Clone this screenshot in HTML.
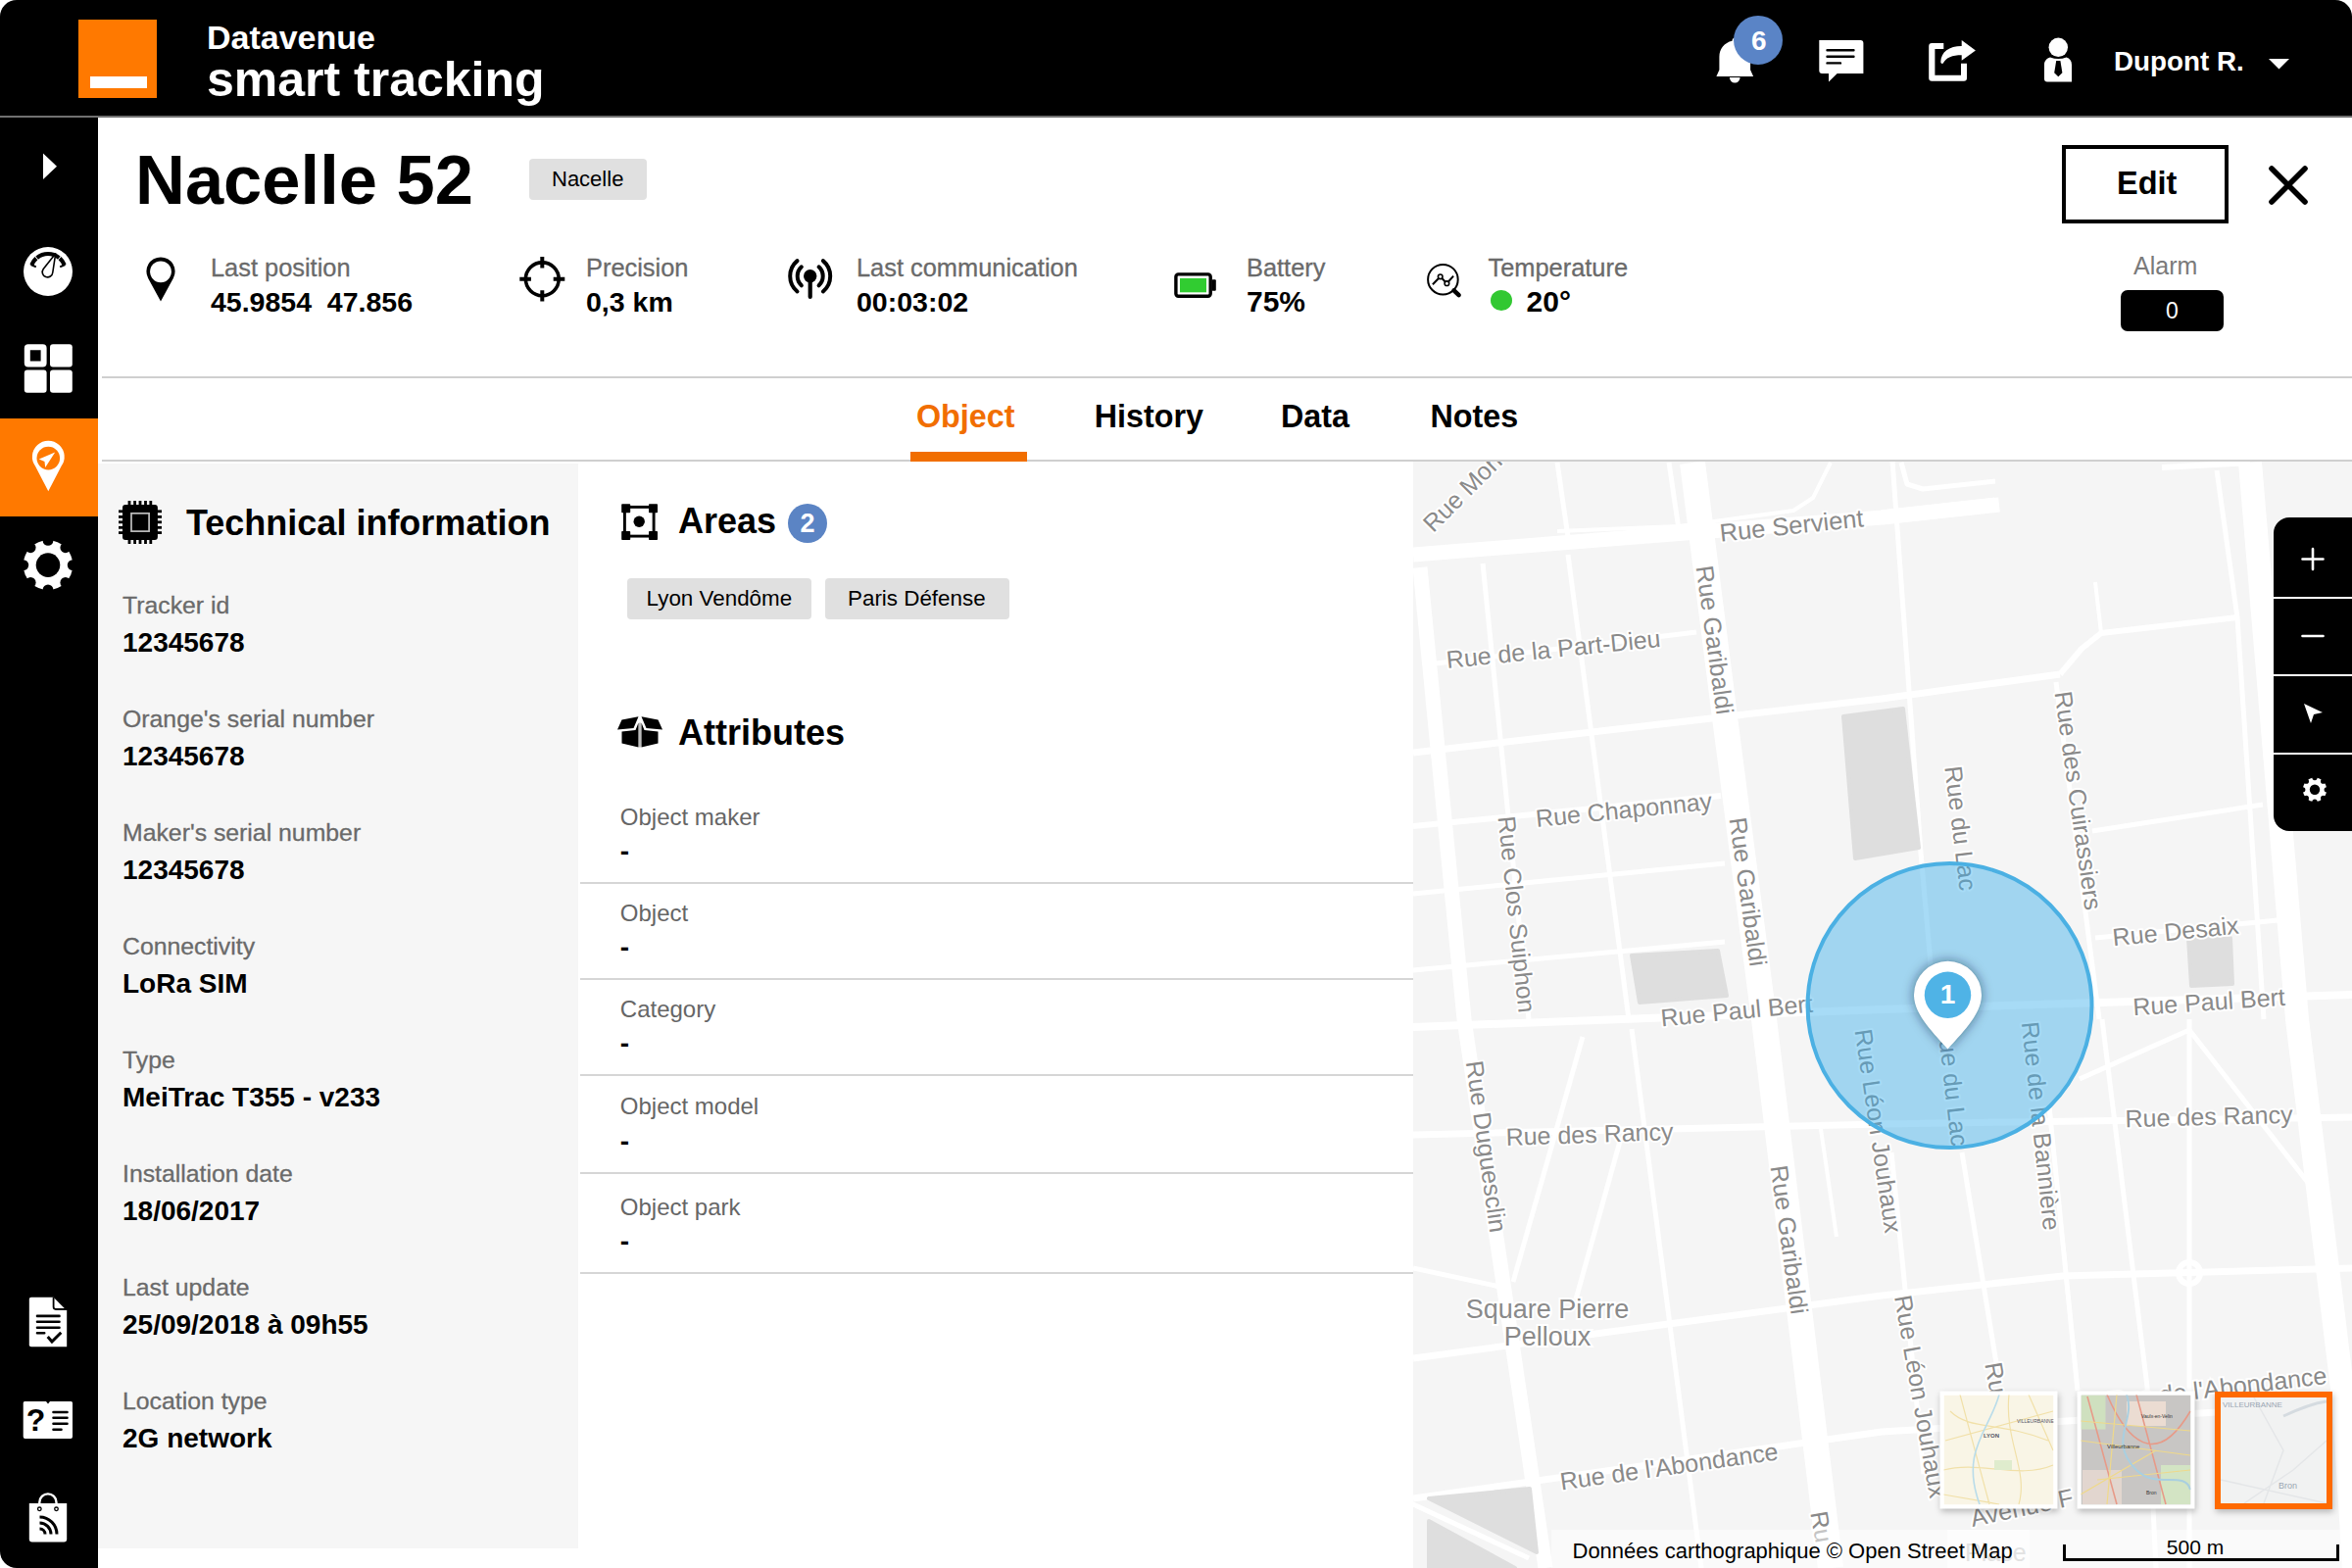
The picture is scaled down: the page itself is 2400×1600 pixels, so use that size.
<!DOCTYPE html>
<html><head><meta charset="utf-8">
<style>
html,body{margin:0;padding:0;width:2400px;height:1600px;overflow:hidden;background:#fff;}
body{position:relative;font-family:"Liberation Sans",sans-serif;}
.t{position:absolute;line-height:1;white-space:nowrap;}
.b{font-weight:bold;}
.lbl{color:#6a6a6a;font-size:25.4px;-webkit-text-stroke:0.3px #6a6a6a;}
.val{color:#000;font-size:28.5px;font-weight:bold;}
.abs{position:absolute;}
</style></head><body>
<!-- header -->
<div class="abs" style="left:0;top:0;width:2400px;height:118px;background:#000;border-radius:17px 17px 0 0;"></div>
<div class="abs" style="left:0;top:118px;width:2400px;height:2px;background:#707070;"></div>
<div class="abs" style="left:80px;top:20px;width:80px;height:80px;background:#ff7900;"></div>
<div class="abs" style="left:92px;top:78px;width:58px;height:12px;background:#fff;"></div>
<div class="t b" style="left:211px;top:21.2px;font-size:34px;color:#fff;">Datavenue</div>
<div class="t b" style="left:211px;top:55.9px;font-size:50px;color:#fff;">smart tracking</div>
<div class="t b" style="left:2157px;top:48.5px;font-size:27.8px;color:#fff;">Dupont R.</div>

<!-- sidebar -->
<div class="abs" style="left:0;top:120px;width:100px;height:1480px;background:#000;border-radius:0 0 0 17px;"></div>
<div class="abs" style="left:0;top:427px;width:100px;height:100px;background:#ff7900;"></div>

<!-- title -->
<div class="t b" style="left:138px;top:149px;font-size:70.5px;color:#000;">Nacelle 52</div>
<div class="abs" style="left:540px;top:162px;width:120px;height:42px;background:#e0e0e0;border-radius:4px;"></div>
<div class="t" style="left:563px;top:172.4px;font-size:22px;color:#000;">Nacelle</div>
<div class="abs" style="left:2104px;top:148px;width:170px;height:80px;border:4px solid #000;box-sizing:border-box;"></div>
<div class="t b" style="left:2160px;top:171.2px;font-size:32.5px;color:#000;">Edit</div>
<div class="t" style="left:2177px;top:259.3px;font-size:25px;color:#7a7a7a;">Alarm</div>
<div class="abs" style="left:2164px;top:296px;width:105px;height:42px;background:#000;border-radius:7px;"></div>
<div class="t" style="left:2164px;width:105px;text-align:center;top:306.3px;font-size:23px;color:#fff;">0</div>

<!-- info row -->
<div class="t lbl" style="left:215px;top:260.8px;">Last position</div>
<div class="t val" style="left:215px;top:293.9px;">45.9854&nbsp; 47.856</div>
<div class="t lbl" style="left:598px;top:260.8px;">Precision</div>
<div class="t val" style="left:598px;top:293.9px;">0,3 km</div>
<div class="t lbl" style="left:874px;top:260.8px;">Last communication</div>
<div class="t val" style="left:874px;top:293.9px;">00:03:02</div>
<div class="t lbl" style="left:1272px;top:260.8px;">Battery</div>
<div class="t val" style="left:1272px;top:292.6px;font-size:30px;">75%</div>
<div class="t lbl" style="left:1518.5px;top:260.8px;">Temperature</div>
<div class="abs" style="left:1520.5px;top:296px;width:22px;height:21px;border-radius:50%;background:#32c832;"></div>
<div class="t val" style="left:1557.6px;top:292.6px;font-size:30px;">20°</div>

<div class="abs" style="left:104px;top:384px;width:2296px;height:2px;background:#cfcfcf;"></div>

<!-- tabs -->
<div class="t b" style="left:935px;top:408.7px;font-size:32.3px;color:#f16e00;">Object</div>
<div class="t b" style="left:1116.7px;top:408.7px;font-size:32.3px;color:#000;">History</div>
<div class="t b" style="left:1307px;top:408.7px;font-size:32.3px;color:#000;">Data</div>
<div class="t b" style="left:1459.5px;top:408.7px;font-size:32.3px;color:#000;">Notes</div>
<div class="abs" style="left:104px;top:469px;width:2296px;height:2px;background:#cfcfcf;"></div>
<div class="abs" style="left:929px;top:461px;width:119px;height:10px;background:#f16e00;"></div>

<!-- left panel -->
<div class="abs" style="left:100px;top:473px;width:490px;height:1107px;background:#f6f6f6;"></div>
<div class="t b" style="left:190px;top:515.5px;font-size:36px;color:#000;">Technical information</div>
<div class="t lbl" style="left:125px;top:605.8px;font-size:24.8px;">Tracker id</div>
<div class="t val" style="left:125px;top:642.3px;font-size:28px;">12345678</div>
<div class="t lbl" style="left:125px;top:721.8px;font-size:24.8px;">Orange's serial number</div>
<div class="t val" style="left:125px;top:758.3px;font-size:28px;">12345678</div>
<div class="t lbl" style="left:125px;top:837.8px;font-size:24.8px;">Maker's serial number</div>
<div class="t val" style="left:125px;top:874.3px;font-size:28px;">12345678</div>
<div class="t lbl" style="left:125px;top:953.8px;font-size:24.8px;">Connectivity</div>
<div class="t val" style="left:125px;top:990.3px;font-size:28px;">LoRa SIM</div>
<div class="t lbl" style="left:125px;top:1069.8px;font-size:24.8px;">Type</div>
<div class="t val" style="left:125px;top:1106.3px;font-size:28px;">MeiTrac T355 - v233</div>
<div class="t lbl" style="left:125px;top:1185.8px;font-size:24.8px;">Installation date</div>
<div class="t val" style="left:125px;top:1222.3px;font-size:28px;">18/06/2017</div>
<div class="t lbl" style="left:125px;top:1301.8px;font-size:24.8px;">Last update</div>
<div class="t val" style="left:125px;top:1338.3px;font-size:28px;">25/09/2018 à 09h55</div>
<div class="t lbl" style="left:125px;top:1417.8px;font-size:24.8px;">Location type</div>
<div class="t val" style="left:125px;top:1454.3px;font-size:28px;">2G network</div>

<!-- middle -->
<div class="t b" style="left:692px;top:514px;font-size:36px;color:#000;">Areas</div>
<div class="abs" style="left:804px;top:514px;width:40px;height:40px;border-radius:50%;background:#5b84c4;"></div>
<div class="t b" style="left:804px;width:40px;text-align:center;top:521px;font-size:27px;color:#fff;">2</div>
<div class="abs" style="left:640px;top:590px;width:188px;height:42px;background:#e0e0e0;border-radius:4px;"></div>
<div class="t" style="left:659.6px;top:600px;font-size:22.4px;color:#000;">Lyon Vendôme</div>
<div class="abs" style="left:842px;top:590px;width:188px;height:42px;background:#e0e0e0;border-radius:4px;"></div>
<div class="t" style="left:865px;top:600px;font-size:22.4px;color:#000;">Paris Défense</div>
<div class="t b" style="left:692px;top:729.5px;font-size:36px;color:#000;">Attributes</div>
<div class="t" style="left:632.8px;top:821.7px;font-size:24px;color:#666;">Object maker</div>
<div class="t b" style="left:632.8px;top:855.3px;font-size:28px;color:#000;">-</div>
<div class="abs" style="left:592px;top:899.6px;width:850px;height:2px;background:#d6d6d6;"></div>
<div class="t" style="left:632.8px;top:919.7px;font-size:24px;color:#666;">Object</div>
<div class="t b" style="left:632.8px;top:953.3px;font-size:28px;color:#000;">-</div>
<div class="abs" style="left:592px;top:997.6px;width:850px;height:2px;background:#d6d6d6;"></div>
<div class="t" style="left:632.8px;top:1017.7px;font-size:24px;color:#666;">Category</div>
<div class="t b" style="left:632.8px;top:1051.3px;font-size:28px;color:#000;">-</div>
<div class="abs" style="left:592px;top:1095.6px;width:850px;height:2px;background:#d6d6d6;"></div>
<div class="t" style="left:632.8px;top:1117.4px;font-size:24px;color:#666;">Object model</div>
<div class="t b" style="left:632.8px;top:1151.0px;font-size:28px;color:#000;">-</div>
<div class="abs" style="left:592px;top:1195.8px;width:850px;height:2px;background:#d6d6d6;"></div>
<div class="t" style="left:632.8px;top:1219.5px;font-size:24px;color:#666;">Object park</div>
<div class="t b" style="left:632.8px;top:1253.1px;font-size:28px;color:#000;">-</div>
<div class="abs" style="left:592px;top:1297.6px;width:850px;height:2px;background:#d6d6d6;"></div>
<!-- MAP -->
<svg class="abs" style="left:1442px;top:471px;" width="958" height="1129" viewBox="1442 471 958 1129">
<rect x="1442" y="471" width="958" height="1129" fill="#f5f5f5"/>
<polyline points="1442,566 1920,528 2040,515" fill="none" stroke="#fff" stroke-width="15" stroke-linecap="butt" stroke-linejoin="round"/>
<polyline points="1589,542 1713,537 1830,521 1850,508 1868,472" fill="none" stroke="#fff" stroke-width="4" stroke-linecap="butt" stroke-linejoin="round"/>
<polyline points="1727,472 1760,732 1800,1040 1868,1600" fill="none" stroke="#fff" stroke-width="26" stroke-linecap="butt" stroke-linejoin="round"/>
<polyline points="1449,579 1494,1040 1577,1600" fill="none" stroke="#fff" stroke-width="15" stroke-linecap="butt" stroke-linejoin="round"/>
<polyline points="1513,575 1560,1040" fill="none" stroke="#fff" stroke-width="5" stroke-linecap="butt" stroke-linejoin="round"/>
<polyline points="1589,472 1600,548" fill="none" stroke="#fff" stroke-width="5" stroke-linecap="butt" stroke-linejoin="round"/>
<polyline points="1600,566 1662,1040" fill="none" stroke="#fff" stroke-width="5" stroke-linecap="butt" stroke-linejoin="round"/>
<polyline points="1703,472 1713,540" fill="none" stroke="#fff" stroke-width="5" stroke-linecap="butt" stroke-linejoin="round"/>
<polyline points="1442,768 1920,713 2102,688" fill="none" stroke="#fff" stroke-width="7" stroke-linecap="butt" stroke-linejoin="round"/>
<polyline points="2102,688 2124,662 2144,646 2283,630" fill="none" stroke="#fff" stroke-width="6" stroke-linecap="butt" stroke-linejoin="round"/>
<polyline points="1465,677 1731,645" fill="none" stroke="#fff" stroke-width="5" stroke-linecap="butt" stroke-linejoin="round"/>
<polyline points="1442,843 1756,812" fill="none" stroke="#fff" stroke-width="6" stroke-linecap="butt" stroke-linejoin="round"/>
<polyline points="1442,912 1760,881" fill="none" stroke="#fff" stroke-width="5" stroke-linecap="butt" stroke-linejoin="round"/>
<polyline points="1442,990 1760,961" fill="none" stroke="#fff" stroke-width="5" stroke-linecap="butt" stroke-linejoin="round"/>
<polyline points="1442,1048 1920,1030 2400,1015" fill="none" stroke="#fff" stroke-width="8" stroke-linecap="butt" stroke-linejoin="round"/>
<polyline points="1442,1158 1920,1147 2400,1140" fill="none" stroke="#fff" stroke-width="7" stroke-linecap="butt" stroke-linejoin="round"/>
<polyline points="1442,1386 1710,1350 1920,1322 2105,1302 2400,1294" fill="none" stroke="#fff" stroke-width="7" stroke-linecap="butt" stroke-linejoin="round"/>
<polyline points="1442,1529 1920,1461 2400,1433" fill="none" stroke="#fff" stroke-width="7" stroke-linecap="butt" stroke-linejoin="round"/>
<polyline points="1442,1294 1540,1315" fill="none" stroke="#fff" stroke-width="5" stroke-linecap="butt" stroke-linejoin="round"/>
<polyline points="1615,1058 1544,1308" fill="none" stroke="#fff" stroke-width="5" stroke-linecap="butt" stroke-linejoin="round"/>
<polyline points="1654,1161 1608,1326" fill="none" stroke="#fff" stroke-width="5" stroke-linecap="butt" stroke-linejoin="round"/>
<polyline points="1665,1050 1736,1600" fill="none" stroke="#fff" stroke-width="5" stroke-linecap="butt" stroke-linejoin="round"/>
<polyline points="1931,470 1960,870 1975,1040" fill="none" stroke="#fff" stroke-width="5" stroke-linecap="butt" stroke-linejoin="round"/>
<polyline points="1930,1176 1963,1504" fill="none" stroke="#fff" stroke-width="5" stroke-linecap="butt" stroke-linejoin="round"/>
<polyline points="2002,1176 2038,1397" fill="none" stroke="#fff" stroke-width="5" stroke-linecap="butt" stroke-linejoin="round"/>
<polyline points="2091,1129 2120,1419" fill="none" stroke="#fff" stroke-width="5" stroke-linecap="butt" stroke-linejoin="round"/>
<polyline points="2145,1040 2191,1415 2200,1600" fill="none" stroke="#fff" stroke-width="5" stroke-linecap="butt" stroke-linejoin="round"/>
<polyline points="2234,1040 2234,1600" fill="none" stroke="#fff" stroke-width="5" stroke-linecap="butt" stroke-linejoin="round"/>
<polyline points="2296,472 2344,1040 2392,1433 2402,1600" fill="none" stroke="#fff" stroke-width="24" stroke-linecap="butt" stroke-linejoin="round"/>
<polyline points="2262,480 2283,630 2310,1040" fill="none" stroke="#fff" stroke-width="5" stroke-linecap="butt" stroke-linejoin="round"/>
<polyline points="2098,696 2142,1040" fill="none" stroke="#fff" stroke-width="5" stroke-linecap="butt" stroke-linejoin="round"/>
<polyline points="2135,848 2309,821" fill="none" stroke="#fff" stroke-width="5" stroke-linecap="butt" stroke-linejoin="round"/>
<polyline points="2138,957 2324,939" fill="none" stroke="#fff" stroke-width="5" stroke-linecap="butt" stroke-linejoin="round"/>
<polyline points="2122,1101 2234,1051 2356,1208" fill="none" stroke="#fff" stroke-width="5" stroke-linecap="butt" stroke-linejoin="round"/>
<polyline points="1440,1534 1560,1590" fill="none" stroke="#fff" stroke-width="5" stroke-linecap="butt" stroke-linejoin="round"/>
<polyline points="1920,528 2036,515" fill="none" stroke="#fff" stroke-width="15" stroke-linecap="butt" stroke-linejoin="round"/>
<polyline points="1940,472 1946,494 1962,499 2036,491" fill="none" stroke="#fff" stroke-width="5" stroke-linecap="butt" stroke-linejoin="round"/>
<polyline points="2206,477 2296,472" fill="none" stroke="#fff" stroke-width="6" stroke-linecap="butt" stroke-linejoin="round"/>
<polyline points="2138,594 2144,646" fill="none" stroke="#fff" stroke-width="4" stroke-linecap="butt" stroke-linejoin="round"/>
<polyline points="1858,1152 1874,1262" fill="none" stroke="#fff" stroke-width="4" stroke-linecap="butt" stroke-linejoin="round"/>
<polygon points="1881,731 1942,723 1958,865 1893,876" fill="#dedede" stroke="#dedede" stroke-width="4" stroke-linejoin="round"/>
<polygon points="1665,975 1753,970 1762,1016 1673,1023" fill="#dedede" stroke="#dedede" stroke-width="4" stroke-linejoin="round"/>
<polygon points="2233,957 2276,957 2278,1004 2236,1006" fill="#dedede" stroke="#dedede" stroke-width="4" stroke-linejoin="round"/>
<polygon points="1458,1529 1561,1519 1568,1584" fill="#dedede" stroke="#dedede" stroke-width="4" stroke-linejoin="round"/>
<polygon points="1458,1552 1546,1600 1458,1600" fill="#dedede" stroke="#dedede" stroke-width="4" stroke-linejoin="round"/>
<circle cx="2234" cy="1299" r="11" fill="none" stroke="#fff" stroke-width="6"/>
<text x="1492" y="502" transform="rotate(-45 1492 502)" text-anchor="middle" dominant-baseline="central" font-family="Liberation Sans" font-size="25" fill="#8a8a8a" stroke="#fff" stroke-width="4" paint-order="stroke" stroke-linejoin="round">Rue Mon</text>
<text x="1828" y="536" transform="rotate(-6 1828 536)" text-anchor="middle" dominant-baseline="central" font-family="Liberation Sans" font-size="25.5" fill="#8a8a8a" stroke="#fff" stroke-width="4" paint-order="stroke" stroke-linejoin="round">Rue Servient</text>
<text x="1585" y="662" transform="rotate(-5.8 1585 662)" text-anchor="middle" dominant-baseline="central" font-family="Liberation Sans" font-size="25" fill="#8a8a8a" stroke="#fff" stroke-width="4" paint-order="stroke" stroke-linejoin="round">Rue de la Part-Dieu</text>
<text x="1750" y="653" transform="rotate(82 1750 653)" text-anchor="middle" dominant-baseline="central" font-family="Liberation Sans" font-size="25" fill="#8a8a8a" stroke="#fff" stroke-width="4" paint-order="stroke" stroke-linejoin="round">Rue Garibaldi</text>
<text x="1657" y="826" transform="rotate(-5.8 1657 826)" text-anchor="middle" dominant-baseline="central" font-family="Liberation Sans" font-size="25" fill="#8a8a8a" stroke="#fff" stroke-width="4" paint-order="stroke" stroke-linejoin="round">Rue Chaponnay</text>
<text x="1548" y="933" transform="rotate(84 1548 933)" text-anchor="middle" dominant-baseline="central" font-family="Liberation Sans" font-size="25" fill="#8a8a8a" stroke="#fff" stroke-width="4" paint-order="stroke" stroke-linejoin="round">Rue Clos Suiphon</text>
<text x="1784" y="910" transform="rotate(82 1784 910)" text-anchor="middle" dominant-baseline="central" font-family="Liberation Sans" font-size="25" fill="#8a8a8a" stroke="#fff" stroke-width="4" paint-order="stroke" stroke-linejoin="round">Rue Garibaldi</text>
<text x="1772" y="1031" transform="rotate(-5.5 1772 1031)" text-anchor="middle" dominant-baseline="central" font-family="Liberation Sans" font-size="25" fill="#8a8a8a" stroke="#fff" stroke-width="4" paint-order="stroke" stroke-linejoin="round">Rue Paul Bert</text>
<text x="2001" y="845" transform="rotate(83 2001 845)" text-anchor="middle" dominant-baseline="central" font-family="Liberation Sans" font-size="25" fill="#8a8a8a" stroke="#fff" stroke-width="4" paint-order="stroke" stroke-linejoin="round">Rue du Lac</text>
<text x="2121" y="817" transform="rotate(82 2121 817)" text-anchor="middle" dominant-baseline="central" font-family="Liberation Sans" font-size="25" fill="#8a8a8a" stroke="#fff" stroke-width="4" paint-order="stroke" stroke-linejoin="round">Rue des Cuirassiers</text>
<text x="2220" y="950" transform="rotate(-5.7 2220 950)" text-anchor="middle" dominant-baseline="central" font-family="Liberation Sans" font-size="25" fill="#8a8a8a" stroke="#fff" stroke-width="4" paint-order="stroke" stroke-linejoin="round">Rue Desaix</text>
<text x="2254" y="1022" transform="rotate(-3.8 2254 1022)" text-anchor="middle" dominant-baseline="central" font-family="Liberation Sans" font-size="25" fill="#8a8a8a" stroke="#fff" stroke-width="4" paint-order="stroke" stroke-linejoin="round">Rue Paul Bert</text>
<text x="1517" y="1170" transform="rotate(82 1517 1170)" text-anchor="middle" dominant-baseline="central" font-family="Liberation Sans" font-size="25" fill="#8a8a8a" stroke="#fff" stroke-width="4" paint-order="stroke" stroke-linejoin="round">Rue Duguesclin</text>
<text x="1622" y="1157" transform="rotate(-2 1622 1157)" text-anchor="middle" dominant-baseline="central" font-family="Liberation Sans" font-size="25" fill="#8a8a8a" stroke="#fff" stroke-width="4" paint-order="stroke" stroke-linejoin="round">Rue des Rancy</text>
<text x="1826" y="1265" transform="rotate(82 1826 1265)" text-anchor="middle" dominant-baseline="central" font-family="Liberation Sans" font-size="25" fill="#8a8a8a" stroke="#fff" stroke-width="4" paint-order="stroke" stroke-linejoin="round">Rue Garibaldi</text>
<text x="1703" y="1496" transform="rotate(-8 1703 1496)" text-anchor="middle" dominant-baseline="central" font-family="Liberation Sans" font-size="25" fill="#8a8a8a" stroke="#fff" stroke-width="4" paint-order="stroke" stroke-linejoin="round">Rue de l'Abondance</text>
<text x="1917" y="1154" transform="rotate(81.5 1917 1154)" text-anchor="middle" dominant-baseline="central" font-family="Liberation Sans" font-size="25" fill="#8a8a8a" stroke="#fff" stroke-width="4" paint-order="stroke" stroke-linejoin="round">Rue Léon Jouhaux</text>
<text x="1993" y="1106" transform="rotate(83.5 1993 1106)" text-anchor="middle" dominant-baseline="central" font-family="Liberation Sans" font-size="25" fill="#8a8a8a" stroke="#fff" stroke-width="4" paint-order="stroke" stroke-linejoin="round">Rue du Lac</text>
<text x="2083" y="1149" transform="rotate(84 2083 1149)" text-anchor="middle" dominant-baseline="central" font-family="Liberation Sans" font-size="25" fill="#8a8a8a" stroke="#fff" stroke-width="4" paint-order="stroke" stroke-linejoin="round">Rue de la Bannière</text>
<text x="1960" y="1425" transform="rotate(80 1960 1425)" text-anchor="middle" dominant-baseline="central" font-family="Liberation Sans" font-size="25" fill="#8a8a8a" stroke="#fff" stroke-width="4" paint-order="stroke" stroke-linejoin="round">Rue Léon Jouhaux</text>
<text x="2254" y="1139" transform="rotate(-1.5 2254 1139)" text-anchor="middle" dominant-baseline="central" font-family="Liberation Sans" font-size="25" fill="#8a8a8a" stroke="#fff" stroke-width="4" paint-order="stroke" stroke-linejoin="round">Rue des Rancy</text>
<text x="2063" y="1538" transform="rotate(-12 2063 1538)" text-anchor="middle" dominant-baseline="central" font-family="Liberation Sans" font-size="25" fill="#8a8a8a" stroke="#fff" stroke-width="4" paint-order="stroke" stroke-linejoin="round">Avenue F</text>
<text x="2037" y="1406" transform="rotate(80 2037 1406)" text-anchor="middle" dominant-baseline="central" font-family="Liberation Sans" font-size="25" fill="#8a8a8a" stroke="#fff" stroke-width="4" paint-order="stroke" stroke-linejoin="round">Ru</text>
<text x="1859" y="1558" transform="rotate(80 1859 1558)" text-anchor="middle" dominant-baseline="central" font-family="Liberation Sans" font-size="25" fill="#8a8a8a" stroke="#fff" stroke-width="4" paint-order="stroke" stroke-linejoin="round">Ru</text>
<text x="2375" y="1412" transform="rotate(-6.7 2375 1412)" text-anchor="end" font-family="Liberation Sans" font-size="25" fill="#8a8a8a" stroke="#fff" stroke-width="4" paint-order="stroke">Rue de l&#39;Abondance</text>
<text x="1579" y="1345" text-anchor="middle" font-family="Liberation Sans" font-size="27" fill="#8a8a8a" stroke="#fff" stroke-width="4" paint-order="stroke">Square Pierre</text>
<text x="1579" y="1373" text-anchor="middle" font-family="Liberation Sans" font-size="27" fill="#8a8a8a" stroke="#fff" stroke-width="4" paint-order="stroke">Pelloux</text>
<circle cx="1989.5" cy="1026" r="145" fill="rgba(60,175,235,0.45)" stroke="#4bb0e3" stroke-width="4"/>
<defs><filter id="sh" x="-50%" y="-50%" width="200%" height="200%"><feGaussianBlur stdDeviation="6"/></filter></defs>
<path d="M1987.5,1070.6 C1975,1056 1953,1036 1953,1015.3 A34.5,34.5 0 1 1 2022,1015.3 C2022,1036 2000,1056 1987.5,1070.6 Z" fill="rgba(0,30,60,0.55)" filter="url(#sh)"/>
<path d="M1987.5,1070.6 C1975,1056 1953,1036 1953,1015.3 A34.5,34.5 0 1 1 2022,1015.3 C2022,1036 2000,1056 1987.5,1070.6 Z" fill="#fff"/>
<circle cx="1987.5" cy="1015.3" r="23.7" fill="#4fb3e6"/>
<text x="1987.5" y="1024.2" text-anchor="middle" font-family="Liberation Sans" font-weight="bold" font-size="28" fill="#fff">1</text>
<path d="M2336,528 H2400 V848 H2336 A16,16 0 0 1 2320,832 V544 A16,16 0 0 1 2336,528 Z" fill="#000"/>
<rect x="2320" y="609" width="80" height="2" fill="#fff"/>
<rect x="2320" y="688" width="80" height="2" fill="#fff"/>
<rect x="2320" y="768" width="80" height="2" fill="#fff"/>
<path d="M2360,560 V581 M2349.5,570.5 H2370.5" stroke="#fff" stroke-width="2.6" stroke-linecap="round"/>
<path d="M2349.5,649 H2370.5" stroke="#fff" stroke-width="2.6" stroke-linecap="round"/>
<path d="M2351,718 L2370,727 L2361,729 L2358,738 Z" fill="#fff"/>
<circle cx="2362" cy="805.8" r="12.2" fill="#fff"/>
<circle cx="2374.20" cy="805.80" r="2.6" fill="#000"/>
<circle cx="2370.63" cy="814.43" r="2.6" fill="#000"/>
<circle cx="2362.00" cy="818.00" r="2.6" fill="#000"/>
<circle cx="2353.37" cy="814.43" r="2.6" fill="#000"/>
<circle cx="2349.80" cy="805.80" r="2.6" fill="#000"/>
<circle cx="2353.37" cy="797.17" r="2.6" fill="#000"/>
<circle cx="2362.00" cy="793.60" r="2.6" fill="#000"/>
<circle cx="2370.63" cy="797.17" r="2.6" fill="#000"/>
<circle cx="2362" cy="805.8" r="5.2" fill="#000"/>
<defs><clipPath id="c1"><rect x="1983.5" y="1423.5" width="112" height="112"/></clipPath><clipPath id="c2"><rect x="2123.5" y="1423.5" width="112" height="112"/></clipPath><clipPath id="c3"><rect x="2266" y="1426" width="108" height="108"/></clipPath><filter id="tsh" x="-20%" y="-20%" width="140%" height="140%"><feGaussianBlur stdDeviation="3"/></filter></defs>
<rect x="1980.5" y="1422.5" width="120" height="120" fill="rgba(0,0,0,0.25)" filter="url(#tsh)"/>
<rect x="2120.5" y="1422.5" width="120" height="120" fill="rgba(0,0,0,0.25)" filter="url(#tsh)"/>
<rect x="2261" y="1423" width="120" height="120" fill="rgba(0,0,0,0.25)" filter="url(#tsh)"/>
<rect x="1979.5" y="1419.5" width="120" height="120" fill="#fff" />
<g clip-path="url(#c1)"><rect x="1983.5" y="1423.5" width="112" height="112" fill="#f9f5e6"/><path d="M1990,1440 C2010,1460 2040,1450 2090,1470 M2000,1423 L2030,1535 M1983,1500 C2020,1490 2060,1510 2095,1495 M2050,1423 C2045,1470 2070,1500 2060,1535 M1985,1470 L2095,1440 M2070,1423 L2095,1480 M1983,1525 L2040,1535" stroke="#f1e0a8" stroke-width="1.2" fill="none"/><path d="M2040,1423 C2030,1460 2000,1480 2020,1535" stroke="#b9dcea" stroke-width="1.6" fill="none"/><path d="M2035,1490 h18 v10 h-18z" fill="#dfeccd"/><text x="2024" y="1467" font-family="Liberation Sans" font-size="6" font-weight="bold" fill="#556">LYON</text><text x="2058" y="1452" font-family="Liberation Sans" font-size="5" fill="#556">VILLEURBANNE</text></g>
<rect x="2119.5" y="1419.5" width="120" height="120" fill="#fff" />
<g clip-path="url(#c2)"><rect x="2123.5" y="1423.5" width="112" height="112" fill="#c8c6c4"/><rect x="2123.5" y="1423.5" width="25" height="35" fill="#cfe0bf"/><rect x="2205" y="1495" width="30" height="40" fill="#d3e4c4"/><rect x="2170" y="1430" width="40" height="25" fill="#ebdcd2"/><rect x="2125" y="1500" width="40" height="35" fill="#e2d6cf"/><path d="M2130,1425 L2160,1535 M2150,1423 C2170,1470 2200,1500 2235,1440 M2180,1423 L2210,1535" stroke="#e79a88" stroke-width="1.6" fill="none"/><path d="M2123,1450 L2235,1460 M2140,1510 L2235,1500 M2123,1525 L2200,1480 M2123,1470 L2235,1485 M2160,1423 L2150,1535" stroke="#efd98a" stroke-width="1.2" fill="none"/><path d="M2170,1423 C2180,1450 2150,1470 2180,1500 C2200,1520 2230,1500 2235,1520" stroke="#a9cfe0" stroke-width="2" fill="none"/><text x="2150" y="1478" font-family="Liberation Sans" font-size="6" fill="#333">Villeurbanne</text><text x="2185" y="1447" font-family="Liberation Sans" font-size="5" fill="#333">Vaulx-en-Velin</text><text x="2190" y="1525" font-family="Liberation Sans" font-size="5" fill="#333">Bron</text></g>
<rect x="2260" y="1420" width="120" height="120" fill="#ff6a00" />
<g clip-path="url(#c3)"><rect x="2266" y="1426" width="108" height="108" fill="#f1f2f2"/><path d="M2330,1445 C2345,1438 2360,1432 2374,1430" stroke="#d5dbe0" stroke-width="3" fill="none"/><path d="M2300,1426 L2330,1480 L2310,1534 M2266,1510 L2374,1534 M2290,1534 L2340,1500 L2374,1470" stroke="#e4e6e8" stroke-width="1.5" fill="none"/><text x="2268" y="1436" font-family="Liberation Sans" font-size="8" fill="#9aa6b2">VILLEURBANNE</text><text x="2325" y="1519" font-family="Liberation Sans" font-size="9" fill="#9aa6b2">Bron</text></g>
<rect x="1987" y="1561" width="84" height="39" fill="#fafafa"/>
<text x="2005" y="1593" font-family="Liberation Sans" font-size="25" fill="#c4c4c4">Place</text>
<rect x="1583" y="1561" width="817" height="39" fill="rgba(255,255,255,0.5)"/>
<text x="1604.5" y="1589.8" font-family="Liberation Sans" font-size="22" fill="#000">Données carthographique © Open Street Map</text>
<text x="2240" y="1585.6" text-anchor="middle" font-family="Liberation Sans" font-size="21" fill="#000">500 m</text>
<path d="M2106.5,1576 V1591.5 H2385.5 V1576" fill="none" stroke="#000" stroke-width="3"/>
</svg>
<!-- /MAP -->
<!-- ICONS -->
<svg class="abs" style="left:0;top:0;" width="2400" height="1600" viewBox="0 0 2400 1600">
<path d="M1770.3,38.6 C1772,38.6 1773,40 1773,41.8 C1781,43.5 1786.1,50 1786.1,58 V71.2 L1789.1,77.9 H1751.4 L1754.4,71.2 V58 C1754.4,50 1759.5,43.5 1767.5,41.8 C1767.5,40 1768.6,38.6 1770.3,38.6 Z" fill="#fff"/>
<path d="M1764.9,79.1 H1775.6 A5.35,5.35 0 0 1 1764.9,79.1 Z" fill="#fff"/>
<circle cx="1794" cy="40.9" r="25" fill="#5a84c6"/>
<text x="1794.8" y="51" text-anchor="middle" font-family="Liberation Sans" font-weight="bold" font-size="28" fill="#fff">6</text>
<path d="M1856.3,40.9 H1898.4 A3,3 0 0 1 1901.4,43.9 V75 H1874.7 L1866,83.4 V75 H1859.3 A3,3 0 0 1 1856.3,72 Z" fill="#fff"/>
<path d="M1864.5,51.2 H1891.5 M1864.5,57.8 H1891.5 M1864.5,64.4 H1878" stroke="#000" stroke-width="2.4" stroke-linecap="round"/>
<path d="M1983.3,44 H1971.2 A3,3 0 0 0 1968.2,47 V79.8 A3,3 0 0 0 1971.2,82.8 H2004 A3,3 0 0 0 2007,79.8 V64.8 H2001 V76.8 H1974.4 V49.9 H1983.3 Z" fill="#fff"/>
<path d="M2015.9,51.4 L2001.7,41.1 V47 C1989,47 1980.5,53 1980.3,63.3 C1980.5,64.8 1982,65.3 1982.8,64.5 C1986,58.5 1992,56.2 2001.7,56.2 V61.8 Z" fill="#fff"/>
<circle cx="2100.3" cy="48.3" r="9.75" fill="#fff"/>
<path d="M2092,58.5 Q2100.3,61.5 2108.6,58.5 C2112,59.5 2114,62 2114,66 V83.4 H2089 A3,3 0 0 1 2086,80.4 V66 C2086,62 2088.5,59.5 2092,58.5 Z" fill="#fff"/>
<path d="M2098.2,62.1 H2102.4 L2104.4,74.2 L2100.3,78.2 L2096.2,74.2 Z" fill="#000"/>
<path d="M2315,60 H2336 L2325.5,70.5 Z" fill="#fff"/>
<path d="M44,156.6 L58,169.8 L44,183 Z" fill="#fff"/>
<circle cx="49" cy="277" r="25" fill="#fff"/>
<path d="M32.31,270.26 A18,18 0 0 1 36.96,263.62 M37.67,263.01 A18,18 0 0 1 60.33,263.01 M61.04,263.62 A18,18 0 0 1 65.69,270.26" fill="none" stroke="#000" stroke-width="4.2"/>
<path d="M31.5,270 L36.8,272.3 M66.5,270 L61.2,272.3" stroke="#000" stroke-width="2"/>
<path d="M56.7,258.8 L53.8,278 A5.3,5.3 0 1 1 44.2,274.5 Z" fill="#fff" stroke="#000" stroke-width="1.6" stroke-linejoin="round"/>
<rect x="27.8" y="354.2" width="16.8" height="17.3" rx="1" fill="none" stroke="#fff" stroke-width="6" />
<rect x="51" y="351.2" width="22.8" height="23.3" rx="3" fill="#fff"/>
<rect x="24.8" y="377.6" width="22.8" height="23.1" rx="3" fill="#fff"/>
<rect x="51" y="377.6" width="22.8" height="23.1" rx="3" fill="#fff"/>
<path d="M49.3,501.2 L36.2,476 A16.4,16.4 0 1 1 62.4,476 Z" fill="#fff"/>
<circle cx="49.3" cy="467.6" r="11.8" fill="#ff7900"/>
<path d="M56.2,461.6 L39.8,468.4 L45.5,471 L46.2,477 Z" fill="#fff"/>
<circle cx="49" cy="576.6" r="25.3" fill="#fff"/>
<circle cx="74.20" cy="576.60" r="5.4" fill="#000"/>
<circle cx="66.82" cy="594.42" r="5.4" fill="#000"/>
<circle cx="49.00" cy="601.80" r="5.4" fill="#000"/>
<circle cx="31.18" cy="594.42" r="5.4" fill="#000"/>
<circle cx="23.80" cy="576.60" r="5.4" fill="#000"/>
<circle cx="31.18" cy="558.78" r="5.4" fill="#000"/>
<circle cx="49.00" cy="551.40" r="5.4" fill="#000"/>
<circle cx="66.82" cy="558.78" r="5.4" fill="#000"/>
<circle cx="49" cy="576.6" r="12.3" fill="#000"/>
<path d="M31.8,1323.8 H54.6 L68.2,1337.4 V1374.2 H31.8 A2,2 0 0 1 29.8,1372.2 V1325.8 A2,2 0 0 1 31.8,1323.8 Z" fill="#fff"/>
<path d="M54.6,1323.8 V1333.6 A2.4,2.4 0 0 0 57,1336 H68.2" fill="none" stroke="#000" stroke-width="1.8"/>
<path d="M38,1342.9 H60.5 M38,1348.8 H60.5 M38,1354.7 H60.5 M38,1360.3 H45.2" stroke="#000" stroke-width="2.6" stroke-linecap="round"/>
<path d="M48.7,1364 L53,1369 L62.3,1359.8" fill="none" stroke="#000" stroke-width="3"/>
<path d="M25.2,1430 H47 L49,1432.5 L51,1430 H72.5 A1.5,1.5 0 0 1 74,1431.5 V1466 A2,2 0 0 1 72,1468 H25.7 A2,2 0 0 1 23.7,1466 V1431.5 A1.5,1.5 0 0 1 25.2,1430 Z" fill="#fff"/>
<text x="36.5" y="1460.3" text-anchor="middle" font-family="Liberation Sans" font-weight="bold" font-size="32" fill="#000">?</text>
<path d="M54.5,1441 H68.5 M54.5,1446.8 H68.5 M54.5,1452.7 H68.5 M54.5,1458.7 H62.5" stroke="#000" stroke-width="2.6" stroke-linecap="round"/>
<path d="M29.8,1533.9 H68.2 V1570.6 A3,3 0 0 1 65.2,1573.6 H32.8 A3,3 0 0 1 29.8,1570.6 Z" fill="#fff"/>
<path d="M40.3,1539.8 V1533 A8.6,8.6 0 0 1 57.5,1533 V1539.8" fill="none" stroke="#fff" stroke-width="2.4"/>
<circle cx="40.3" cy="1539.8" r="1.8" fill="none" stroke="#000" stroke-width="1.3"/>
<circle cx="57.5" cy="1539.8" r="1.8" fill="none" stroke="#000" stroke-width="1.3"/>
<path d="M40.5,1560 A5.5,5.5 0 0 1 46,1565.5 M40.5,1554 A11.5,11.5 0 0 1 52,1565.5 M40.5,1548 A17.5,17.5 0 0 1 58,1565.5" fill="none" stroke="#000" stroke-width="3"/>
<path d="M164,307.4 L151.2,284 A14.6,14.6 0 1 1 176.8,284 Z" fill="#000"/>
<circle cx="164" cy="277.3" r="10.9" fill="#fff"/>
<circle cx="553.3" cy="284.8" r="16.9" fill="none" stroke="#000" stroke-width="3.6"/>
<path d="M553.3,262 V273.4 M553.3,296.2 V307.6 M530.3,284.8 H541.9 M564.7,284.8 H576.3" stroke="#000" stroke-width="4"/>
<circle cx="826.7" cy="281.8" r="6.7" fill="#000"/>
<path d="M826.7,283 V303" stroke="#000" stroke-width="4.2" stroke-linecap="round"/>
<path d="M817.83,291.31 A13,13 0 0 1 817.83,272.29 M835.57,272.29 A13,13 0 0 1 835.57,291.31 M813.52,297.50 A20.5,20.5 0 0 1 813.52,266.10 M839.88,266.10 A20.5,20.5 0 0 1 839.88,297.50" fill="none" stroke="#000" stroke-width="4" stroke-linecap="round"/>
<rect x="1199.9" y="279.9" width="35.3" height="22.3" rx="2.5" fill="none" stroke="#000" stroke-width="3.4"/>
<rect x="1236.5" y="285.3" width="4.3" height="11.5" rx="1" fill="#000"/>
<rect x="1204" y="284" width="27" height="14.3" fill="#31cc31"/>
<circle cx="1472.4" cy="285.2" r="15.3" fill="none" stroke="#000" stroke-width="2"/>
<path d="M1483.6,296.4 L1488.6,301.2" stroke="#000" stroke-width="4.5" stroke-linecap="round"/>
<path d="M1461.9,290.3 L1469.7,282.3 L1476.4,289.2 L1483.1,281.7" fill="none" stroke="#000" stroke-width="2"/>
<circle cx="1469.7" cy="282.3" r="2.3" fill="#fff" stroke="#000" stroke-width="1.6"/>
<circle cx="1476.4" cy="289.2" r="2.3" fill="#fff" stroke="#000" stroke-width="1.6"/>
<path d="M2318,172 L2352,206 M2352,172 L2318,206" stroke="#000" stroke-width="5.6" stroke-linecap="round"/>
<rect x="125" y="515" width="35.9" height="35.9" rx="3" fill="#000"/>
<rect x="130.6" y="511" width="2.8" height="44" fill="#000"/>
<rect x="121" y="520.4" width="44" height="2.8" fill="#000"/>
<rect x="136.2" y="511" width="2.8" height="44" fill="#000"/>
<rect x="121" y="526.0" width="44" height="2.8" fill="#000"/>
<rect x="141.6" y="511" width="2.8" height="44" fill="#000"/>
<rect x="121" y="531.4" width="44" height="2.8" fill="#000"/>
<rect x="147.1" y="511" width="2.8" height="44" fill="#000"/>
<rect x="121" y="536.9" width="44" height="2.8" fill="#000"/>
<rect x="152.4" y="511" width="2.8" height="44" fill="#000"/>
<rect x="121" y="542.2" width="44" height="2.8" fill="#000"/>
<rect x="134" y="523.8" width="18.1" height="18.3" fill="none" stroke="#c0c0c0" stroke-width="1.7"/>
<rect x="637.4" y="517.4" width="29.7" height="29.7" fill="none" stroke="#000" stroke-width="2.9"/>
<rect x="634.2" y="514.2" width="9" height="9" rx="0.8" fill="#000"/>
<rect x="662" y="514.2" width="9" height="9" rx="0.8" fill="#000"/>
<rect x="634.2" y="542" width="9" height="9" rx="0.8" fill="#000"/>
<rect x="662" y="542" width="9" height="9" rx="0.8" fill="#000"/>
<circle cx="652.2" cy="532.2" r="5.7" fill="#000"/>
<path d="M630,744.5 L634.5,734.5 L651.5,731.2 L646.5,743 Z M676,744.5 L671.5,734.5 L654.5,731.2 L659.5,743 Z" fill="#000"/>
<path d="M634.5,746.5 L648.5,745 L651.5,737.5 V762.5 L634.5,758.5 Z M671.5,746.5 L657.5,745 L654.5,737.5 V762.5 L671.5,758.5 Z" fill="#000"/>
<rect x="652" y="737.5" width="2" height="25" fill="#bdbdbd"/>
</svg>
<!-- /ICONS -->
</body></html>
